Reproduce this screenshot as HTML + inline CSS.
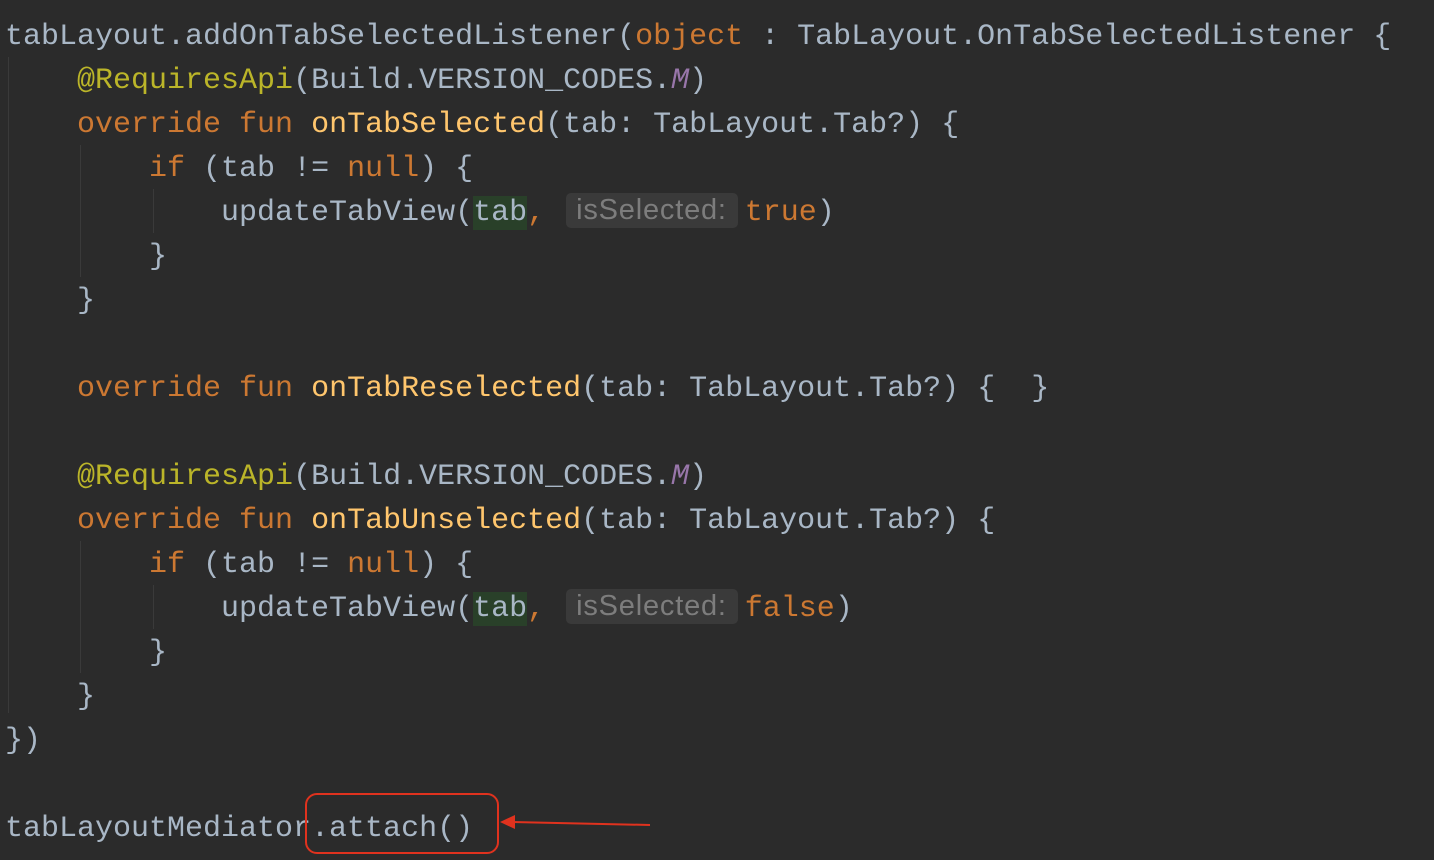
<!DOCTYPE html>
<html><head><style>
html,body{margin:0;padding:0;background:#2b2b2b;width:1434px;height:860px;overflow:hidden;position:relative}
pre{margin:0;position:absolute;left:5px;top:15px;font-family:"Liberation Mono",monospace;font-size:30px;line-height:44px;color:#a9b7c6}
.k{color:#cc7832}.f{color:#ffc66d}.a{color:#bbb529}.m{color:#9876aa;font-style:italic}
.h{background:#294029}
.hint{display:inline-block;background:#3a3a3a;color:#7d7d7d;font-family:"Liberation Sans",sans-serif;font-size:29px;line-height:35px;padding:0 11px 0 10px;border-radius:5px;margin:0 7px 0 3px;vertical-align:1px;letter-spacing:0.8px}
.g{position:absolute;width:1px;background:#3a3a3a}
</style></head><body>
<div class="g" style="left:8px;top:57px;height:656px"></div>
<div class="g" style="left:80px;top:145px;height:132px"></div>
<div class="g" style="left:80px;top:541px;height:132px"></div>
<div class="g" style="left:153px;top:189px;height:44px"></div>
<div class="g" style="left:153px;top:585px;height:44px"></div>
<pre>tabLayout.addOnTabSelectedListener(<span class="k">object</span> : TabLayout.OnTabSelectedListener {
    <span class="a">@RequiresApi</span>(Build.VERSION_CODES.<span class="m">M</span>)
    <span class="k">override fun</span> <span class="f">onTabSelected</span>(tab: TabLayout.Tab?) {
        <span class="k">if</span> (tab != <span class="k">null</span>) {
            updateTabView(<span class="h">tab</span><span class="k">,</span> <span class="hint">isSelected:</span><span class="k">true</span>)
        }
    }

    <span class="k">override fun</span> <span class="f">onTabReselected</span>(tab: TabLayout.Tab?) {  }

    <span class="a">@RequiresApi</span>(Build.VERSION_CODES.<span class="m">M</span>)
    <span class="k">override fun</span> <span class="f">onTabUnselected</span>(tab: TabLayout.Tab?) {
        <span class="k">if</span> (tab != <span class="k">null</span>) {
            updateTabView(<span class="h">tab</span><span class="k">,</span> <span class="hint">isSelected:</span><span class="k">false</span>)
        }
    }
})

tabLayoutMediator.attach()</pre>
<div style="position:absolute;left:305px;top:793px;width:190px;height:57px;border:2px solid #e0321e;border-radius:12px"></div>
<svg style="position:absolute;left:0;top:0" width="1434" height="860"><line x1="650" y1="825" x2="512" y2="822" stroke="#e0321e" stroke-width="2"/><polygon points="500,822 515,815 515,829" fill="#e0321e"/></svg>
</body></html>
